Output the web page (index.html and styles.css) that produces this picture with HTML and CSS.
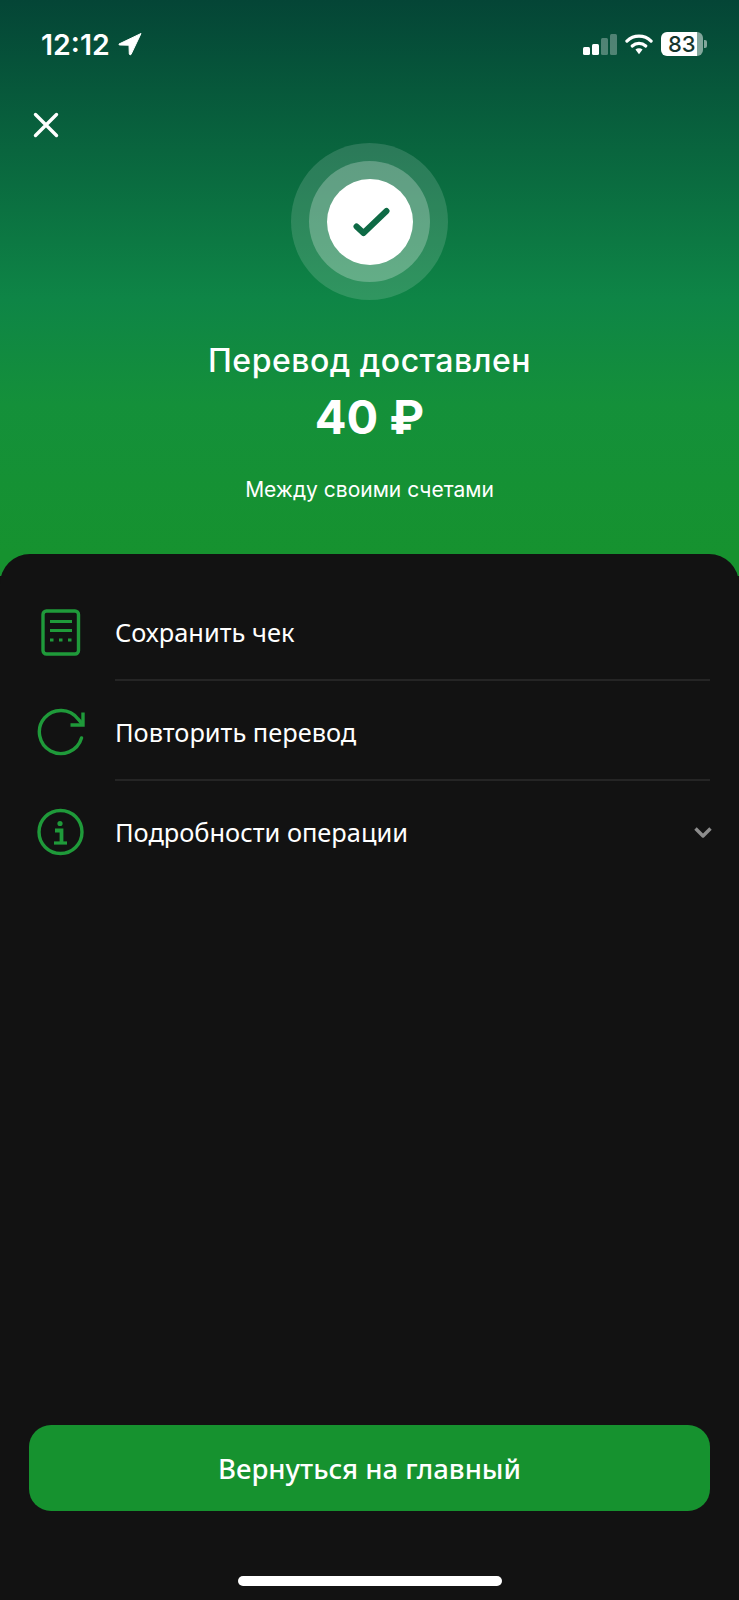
FILE: index.html
```html
<!DOCTYPE html>
<html lang="ru">
<head>
    <meta charset="UTF-8">
    <meta name="viewport" content="width=device-width, initial-scale=1.0">
    <title>Перевод доставлен</title>
    <link rel="stylesheet" href="styles.css">
</head>
<body>
    <div class="screen">
        <!-- Green header -->
        <div class="hero">
            <div class="status-bar">
                <div class="status-left">
                    <span class="time">12:12</span>
                    <svg class="location" width="24" height="24" viewBox="0 0 24 24">
                        <path d="M23 1.5 L1 12 Q0.5 13 2 13 L11 13.2 L11.3 22 Q12 23.5 13 22.5 Z" fill="#fff" stroke="#fff" stroke-width="1" stroke-linejoin="round"/>
                    </svg>
                </div>
                <div class="status-right">
                    <div class="signal">
                        <span class="bar bar-1"></span>
                        <span class="bar bar-2"></span>
                        <span class="bar bar-3 off"></span>
                        <span class="bar bar-4 off"></span>
                    </div>
                    <svg class="wifi" width="28" height="22" viewBox="0 0 29 22">
                        <path d="M2 8 C9 1.2 20 1.2 27 8" fill="none" stroke="#fff" stroke-width="3.4" stroke-linecap="round"/>
                        <path d="M7.5 13 C11.5 9.5 17.5 9.5 21.5 13" fill="none" stroke="#fff" stroke-width="3.4" stroke-linecap="round"/>
                        <path d="M10.8 16.8 L14.5 21.5 L18.2 16.8 C16 15 13 15 10.8 16.8 Z" fill="#fff"/>
                    </svg>
                    <div class="battery">
                        <div class="battery-body">
                            <span class="battery-level">83</span>
                        </div>
                        <span class="battery-cap"></span>
                    </div>
                </div>
            </div>

            <button class="close-btn" aria-label="Закрыть">
                <svg width="26" height="26" viewBox="0 0 26 26">
                    <path d="M2.5 2.5 L23.5 23.5 M23.5 2.5 L2.5 23.5" stroke="#fff" stroke-width="3.4" stroke-linecap="round"/>
                </svg>
            </button>

            <div class="success-icon">
                <div class="ring-outer">
                    <div class="ring-inner">
                        <div class="ring-core">
                            <svg width="40" height="32" viewBox="0 0 40 32">
                                <path d="M6.5 20.5 L13.5 27 L36.5 5" fill="none" stroke="#0e6a45" stroke-width="6" stroke-linecap="round" stroke-linejoin="round"/>
                            </svg>
                        </div>
                    </div>
                </div>
            </div>

            <h1 class="title">Перевод доставлен</h1>
            <div class="amount">40 ₽</div>
            <p class="subtitle">Между своими счетами</p>
        </div>

        <!-- Dark sheet -->
        <div class="sheet">
            <ul class="actions">
                <li class="action">
                    <span class="action-icon">
                        <svg width="48" height="48" viewBox="0 0 48 48">
                            <rect x="6" y="3" width="35.5" height="43" rx="3.5" fill="none" stroke="#1f9a3a" stroke-width="3.4"/>
                            <path d="M13 13.5 H35 M13 22.5 H35" stroke="#1f9a3a" stroke-width="3"/>
                            <path d="M13 32 H16.5 M22 32 H25.5 M31 32 H34.5" stroke="#1f9a3a" stroke-width="3"/>
                        </svg>
                    </span>
                    <span class="action-text">Сохранить чек</span>
                </li>
                <li class="action">
                    <span class="action-icon">
                        <svg width="48" height="48" viewBox="0 0 48 48">
                            <path d="M44.5 30 A21.5 21.5 0 1 1 41 11 L45 15.5" fill="none" stroke="#1f9a3a" stroke-width="3.4" stroke-linecap="round"/>
                            <path d="M46 4.5 V17 H33.5" fill="none" stroke="#1f9a3a" stroke-width="3.4"/>
                        </svg>
                    </span>
                    <span class="action-text">Повторить перевод</span>
                </li>
                <li class="action">
                    <span class="action-icon">
                        <svg width="48" height="48" viewBox="0 0 48 48">
                            <circle cx="23.5" cy="24" r="21.5" fill="none" stroke="#1f9a3a" stroke-width="3.4"/>
                            <circle cx="23" cy="15.5" r="2.6" fill="#1f9a3a"/>
                            <path d="M18 22.5 H24.5 V35" fill="none" stroke="#1f9a3a" stroke-width="3.8"/>
                            <path d="M17 35 H30" fill="none" stroke="#1f9a3a" stroke-width="3.2"/>
                        </svg>
                    </span>
                    <span class="action-text">Подробности операции</span>
                    <svg class="chevron" width="20" height="13" viewBox="0 0 20 13">
                        <path d="M2.5 2.5 L10 10 L17.5 2.5" fill="none" stroke="#8c8c8c" stroke-width="3.4" stroke-linejoin="round"/>
                    </svg>
                </li>
            </ul>

            <button class="main-btn">Вернуться на главный</button>
            <div class="home-indicator"></div>
        </div>
    </div>
</body>
</html>
```

FILE: styles.css
```css
* {
    box-sizing: border-box;
}
html, body {
    margin: 0;
    padding: 0;
}
body {
    font-family: "Noto Sans", "Open Sans", sans-serif;
    background-color: #121212;
    color: #ffffff;
}
.screen {
    display: flex;
    flex-direction: column;
    height: 1600px;
}
.hero {
    height: 576px;
    padding: 0 29px;
    display: flex;
    flex-direction: column;
    align-items: center;
    background: linear-gradient(180deg, #044536 0%, #0e8546 52%, #14903a 70%, #16922f 96%);
}
.status-bar {
    width: 100%;
    height: 44px;
    margin-top: 22px;
    padding: 0 3px 0 12px;
    display: flex;
    justify-content: space-between;
    align-items: center;
}
.status-left {
    display: flex;
    align-items: center;
    gap: 8px;
}
.time {
    font-family: "Inter", sans-serif;
    font-size: 28.5px;
    font-weight: 600;
}
.status-right {
    display: flex;
    align-items: center;
    gap: 8px;
}
.signal {
    display: flex;
    align-items: flex-end;
    gap: 2px;
    height: 21px;
}
.bar {
    width: 7px;
    background-color: #fff;
    border-radius: 1.5px;
}
.bar.off {
    background-color: rgba(255, 255, 255, 0.3);
}
.bar-1 { height: 8px; }
.bar-2 { height: 11px; }
.bar-3 { height: 17px; }
.bar-4 { height: 21px; }
.battery {
    display: flex;
    align-items: center;
    gap: 1px;
}
.battery-body {
    width: 42px;
    height: 24px;
    border-radius: 6px;
    background: linear-gradient(90deg, #fff 86%, rgba(255, 255, 255, 0.5) 86%);
    display: flex;
    align-items: center;
    padding-left: 7px;
}
.battery-level {
    font-family: "Inter", sans-serif;
    font-size: 22px;
    font-weight: 500;
    color: #15352c;
    line-height: 1;
}
.battery-cap {
    width: 3px;
    height: 8px;
    border-radius: 0 2px 2px 0;
    background-color: rgba(255, 255, 255, 0.5);
}
.close-btn {
    align-self: flex-start;
    margin: 46px 0 0 4px;
    padding: 0;
    border: none;
    background: none;
    display: flex;
}
.success-icon {
    margin-top: 5px;
}
.ring-outer, .ring-inner, .ring-core {
    border-radius: 50%;
    display: flex;
    align-items: center;
    justify-content: center;
}
.ring-outer {
    width: 157px;
    height: 157px;
    background-color: rgba(255, 255, 255, 0.14);
}
.ring-inner {
    width: 121px;
    height: 121px;
    background-color: rgba(255, 255, 255, 0.25);
}
.ring-core {
    width: 86px;
    height: 86px;
    background-color: #ffffff;
}
.title {
    margin: 39px 0 0;
    font-family: "Inter", sans-serif;
    font-size: 32px;
    font-weight: 500;
    letter-spacing: 0.5px;
    line-height: 44px;
}
.amount {
    margin-top: 6px;
    font-family: "Inter", sans-serif;
    font-size: 47px;
    font-weight: 700;
    line-height: 56px;
}
.subtitle {
    margin: 30px 0 0;
    font-family: "Inter", sans-serif;
    font-size: 21px;
    line-height: 30px;
}
.sheet {
    flex: 1;
    margin-top: -22px;
    padding: 28px 29px 14px;
    display: flex;
    flex-direction: column;
    background-color: #121212;
    border-radius: 30px 30px 0 0;
}
.actions {
    list-style: none;
    margin: 0;
    padding: 0;
    flex: 1;
}
.action {
    display: flex;
    align-items: center;
    height: 100px;
    position: relative;
}
.action + .action::before {
    content: "";
    position: absolute;
    top: -3px;
    left: 86px;
    right: 0;
    height: 2px;
    background-color: #252525;
}
.action-icon {
    width: 86px;
    display: flex;
    padding-left: 8px;
}
.action-text {
    flex: 1;
    font-size: 25.4px;
}
.chevron {
    margin-right: -3px;
}
.main-btn {
    width: 100%;
    height: 86px;
    border: none;
    border-radius: 22px;
    background-color: #16922f;
    color: #ffffff;
    font-family: "Noto Sans", sans-serif;
    font-size: 27.5px;
    font-weight: 500;
}
.home-indicator {
    width: 264px;
    height: 10px;
    margin: 65px auto 0;
    border-radius: 5px;
    background-color: #ffffff;
}
```
